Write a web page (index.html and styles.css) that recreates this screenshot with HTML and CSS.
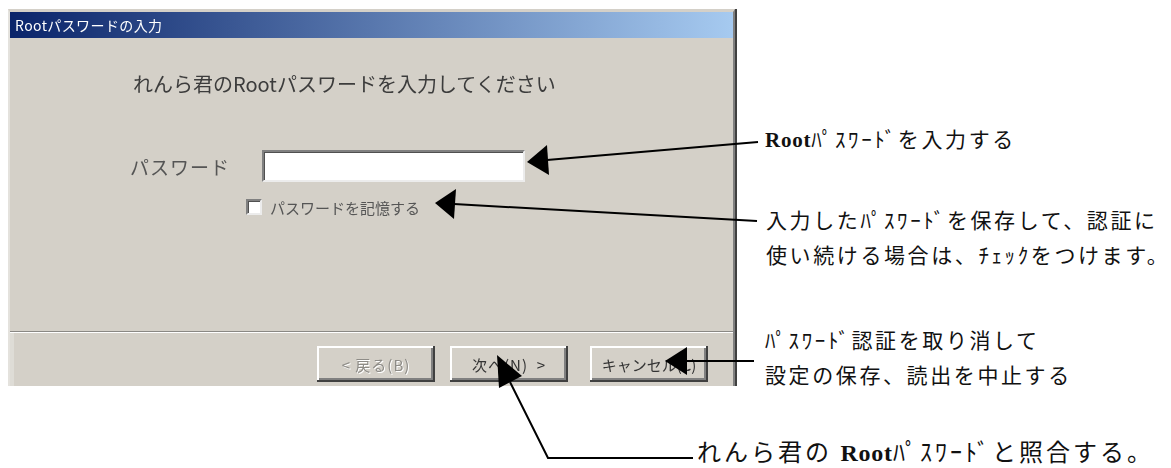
FILE: index.html
```html
<!DOCTYPE html>
<html lang="ja">
<head>
    <meta charset="UTF-8">
    <meta name="viewport" content="width=device-width, initial-scale=1.0">
    <title>Rootパスワードの入力</title>
    <link rel="stylesheet" href="styles.css">
</head>
<body>
    <div class="stage">
        <div class="dialog">
            <div class="titlebar">Rootパスワードの入力</div>
            <div class="content">
                <p class="lead">れんら君のRootパスワードを入力してください</p>
                <div class="field">
                    <label class="field-label" for="pw">パスワード</label>
                    <input class="textbox" id="pw" type="password">
                </div>
                <div class="remember">
                    <span class="checkbox"></span>
                    <span>パスワードを記憶する</span>
                </div>
            </div>
            <div class="footer">
                <button class="btn" disabled>&lt; 戻る(B)</button>
                <button class="btn btn-next">次へ(N)&nbsp;&nbsp;&gt;</button>
                <button class="btn btn-cancel">キャンセル(C)</button>
            </div>
        </div>

        <!-- callout arrows -->
        <svg class="arrows" width="1171" height="468" viewBox="0 0 1171 468">
            <g stroke="#000" stroke-width="2" fill="none">
                <line x1="547" y1="160" x2="758" y2="142"/>
                <line x1="454" y1="204" x2="757" y2="221"/>
                <line x1="686" y1="361" x2="754" y2="361"/>
                <polyline points="510,382 548,458 693,458"/>
            </g>
            <g fill="#000">
                <polygon points="527,162 549,175 547,145"/>
                <polygon points="435,203 456,189 454,219"/>
                <polygon points="665,361 687,347 687,375"/>
                <polygon points="497,355 522,376 499,388"/>
            </g>
        </svg>

        <p class="note note-input"><span class="latin">Root</span>ﾊﾟｽﾜｰﾄﾞを入力する</p>
        <p class="note note-remember">入力したﾊﾟｽﾜｰﾄﾞを保存して、認証に<br>使い続ける場合は、ﾁｪｯｸをつけます。</p>
        <p class="note note-cancel">ﾊﾟｽﾜｰﾄﾞ認証を取り消して<br>設定の保存、読出を中止する</p>
        <p class="note note-next">れんら君の <span class="latin">Root</span>ﾊﾟｽﾜｰﾄﾞと照合する。</p>
    </div>
</body>
</html>
```

FILE: styles.css
```css
body {
    margin: 0;
    background: #fff;
    font-family: "Noto Sans CJK JP", sans-serif;
}

.stage {
    position: relative;
    width: 1171px;
    height: 468px;
    overflow: hidden;
}

/* dialog window (the original is a scaled-up capture, so soften it a bit) */
.dialog {
    margin: 9px 0 0 8px;
    width: 727px;
    height: 377px;
    box-sizing: border-box;
    background: #d4d0c8;
    border-top: 3px solid #d4d0c8;
    border-left: 2px solid #e4e2dd;
    border-right: 2px solid #808080;
    box-shadow: 2px 0 0 #404040;
    display: flex;
    flex-direction: column;
    filter: blur(0.3px);
}

.titlebar {
    height: 26px;
    line-height: 26px;
    padding-left: 5px;
    background: linear-gradient(to right, #0a246a, #a6caf0);
    color: #fff;
    font-size: 14px;
    letter-spacing: 0.4px;
}

.content {
    height: 293px;
    box-sizing: border-box;
    padding-top: 34px;
    color: #3c3c3c;
}

.lead {
    margin: 0 0 0 123px;
    font-size: 20px;
    line-height: 24px;
}

.field {
    margin-top: 54px;
    height: 32px;
    display: flex;
    align-items: center;
}

.field-label {
    width: 132px;
    margin-left: 120px;
    font-size: 19px;
    letter-spacing: 1px;
    color: #555;
}

.textbox {
    width: 263px;
    height: 32px;
    box-sizing: border-box;
    margin: 0;
    background: #fff;
    border-style: solid;
    border-width: 2px;
    border-color: #808080 #ececec #ececec #808080;
    box-shadow: inset 1px 1px 0 #505050;
}

.remember {
    margin-top: 15px;
    height: 20px;
    padding-left: 236px;
    display: flex;
    align-items: center;
    gap: 8px;
    font-size: 15px;
    color: #555;
}

.checkbox {
    width: 16px;
    height: 16px;
    box-sizing: border-box;
    background: #fff;
    border-style: solid;
    border-width: 2px;
    border-color: #808080 #ececec #ececec #808080;
    box-shadow: inset 1px 1px 0 #505050;
}

.footer {
    flex: 1;
    border-top: 1px solid #8a8884;
    box-shadow: inset 0 1px 0 #fff, inset 4px 0 0 #dedcd6;
    display: flex;
    justify-content: flex-end;
    align-items: flex-start;
    padding: 14px 25px 0 0;
}

.btn {
    width: 118px;
    height: 36px;
    border: none;
    background: #d4d0c8;
    box-shadow: inset -2px -2px 0 #404040, inset 2px 2px 0 #fff, inset -4px -4px 0 #808080;
    font-family: "Noto Sans CJK JP", sans-serif;
    font-size: 15px;
    color: #333;
    padding: 0;
}

.btn:disabled {
    color: #8e8c87;
    text-shadow: 1px 1px 0 #fff;
    letter-spacing: 1px;
}

.btn-next {
    margin-left: 15px;
    letter-spacing: 1px;
}

.btn-cancel {
    margin-left: 22px;
}

/* annotations */
.arrows {
    position: absolute;
    left: 0;
    top: 0;
}

.note {
    position: absolute;
    margin: 0;
    font-size: 21px;
    line-height: 35px;
    letter-spacing: 2.6px;
    color: #111;
    white-space: nowrap;
}

.latin {
    font-family: "Liberation Serif", serif;
    font-weight: bold;
    letter-spacing: 0.8px;
}

.note-input {
    left: 765px;
    top: 121px;
}

.note-remember {
    left: 766px;
    top: 202px;
}

.note-cancel {
    left: 765px;
    top: 322px;
}

.note-next {
    left: 697px;
    top: 433px;
    font-size: 24px;
    letter-spacing: 3px;
}
```
